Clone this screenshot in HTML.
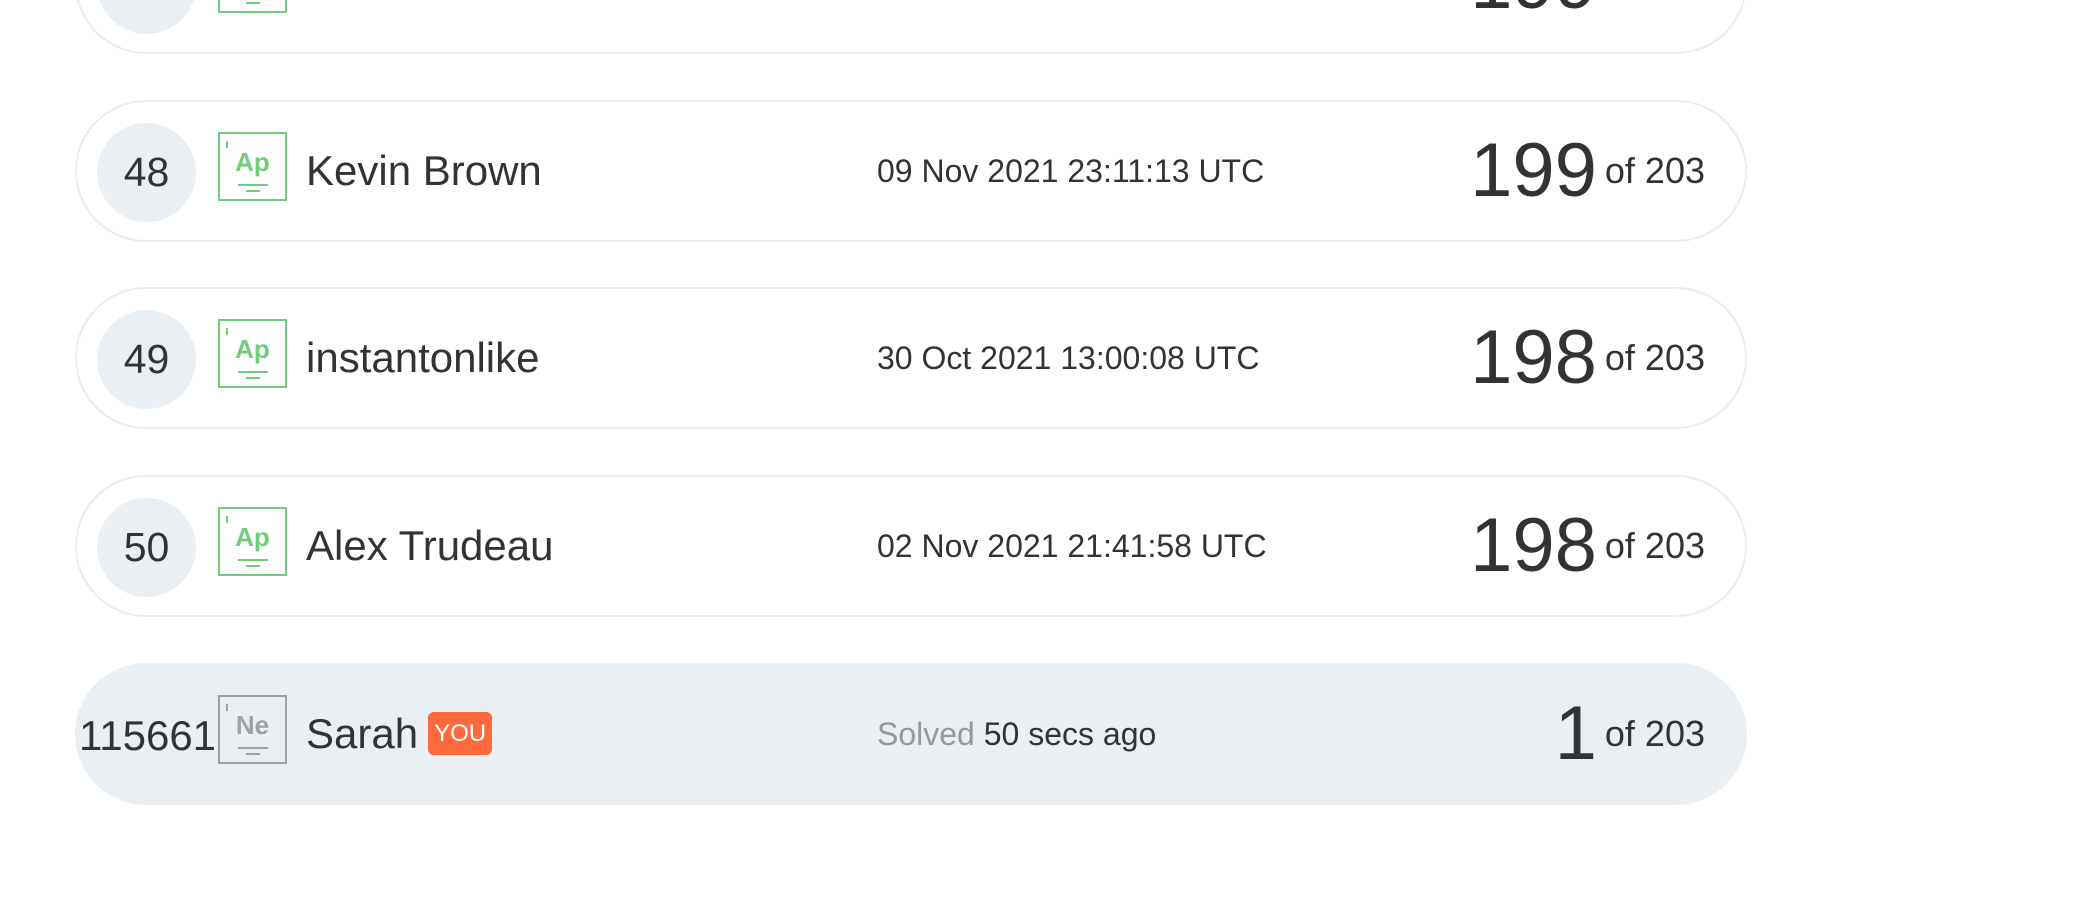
<!DOCTYPE html>
<html><head><meta charset="utf-8"><style>
*{margin:0;padding:0;box-sizing:border-box}
body{width:2096px;height:912px;background:#fff;font-family:"Liberation Sans",Arial,sans-serif;color:#333;position:relative;overflow:hidden}
.row{position:absolute;left:75px;width:1672px;height:142px;border:2px solid #e8edf0;border-radius:71px;background:#fff}
.row.me{background:#e9eff2;border-color:#e9eff2}
.rank{position:absolute;left:20px;top:21px;width:99px;height:99px;border-radius:50%;background:#e9eff2;font-size:41px;line-height:99px;text-align:center}
.me .rank{background:none;left:2px;width:auto;text-align:left;font-size:42px}
.ico{position:absolute;left:141px;top:30px;width:69px;height:69px;border:2px solid #72cc7c;color:#72cc7c}
.ico .t{position:absolute;left:6px;top:7px;width:2px;height:7px;background:currentColor}
.ico .s{position:absolute;left:0;right:0;top:14px;text-align:center;font-weight:bold;font-size:26px;line-height:28px}
.ico .l1{position:absolute;left:18px;width:30px;top:50px;height:2px;background:currentColor}
.ico .l2{position:absolute;left:26px;width:14px;top:56px;height:2px;background:currentColor}
.me .ico{border-color:#a2a2a2;color:#a2a2a2}
.name{position:absolute;left:229px;top:0;line-height:138px;font-size:42px}
.date{position:absolute;left:800px;top:0;line-height:138px;font-size:32px}
.score{position:absolute;right:40px;top:0;line-height:138px;white-space:nowrap}
.score b{font-weight:normal;font-size:76px;vertical-align:middle}
.score span{font-size:36px;vertical-align:middle;margin-left:8px}
.you{display:inline-block;background:#fd6a3e;color:#fff;font-size:24px;line-height:43px;height:43px;padding:0 6px;border-radius:6px;vertical-align:middle;margin-left:10px;position:relative;top:-3px}
</style></head><body>
<div class="row" style="top:-88px"><div class="rank">47</div><div class="ico"><div class="t"></div><div class="s">Ap</div><div class="l1"></div><div class="l2"></div></div><div class="name">Name</div><div class="score"><b>199</b><span>of 203</span></div></div>
<div class="row" style="top:100px"><div class="rank">48</div><div class="ico"><div class="t"></div><div class="s">Ap</div><div class="l1"></div><div class="l2"></div></div><div class="name">Kevin Brown</div><div class="date">09 Nov 2021 23:11:13 UTC</div><div class="score"><b>199</b><span>of 203</span></div></div>
<div class="row" style="top:287px"><div class="rank">49</div><div class="ico"><div class="t"></div><div class="s">Ap</div><div class="l1"></div><div class="l2"></div></div><div class="name">instantonlike</div><div class="date">30 Oct 2021 13:00:08 UTC</div><div class="score"><b>198</b><span>of 203</span></div></div>
<div class="row" style="top:475px"><div class="rank">50</div><div class="ico"><div class="t"></div><div class="s">Ap</div><div class="l1"></div><div class="l2"></div></div><div class="name">Alex Trudeau</div><div class="date">02 Nov 2021 21:41:58 UTC</div><div class="score"><b>198</b><span>of 203</span></div></div>
<div class="row me" style="top:663px"><div class="rank">115661</div><div class="ico"><div class="t"></div><div class="s">Ne</div><div class="l1"></div><div class="l2"></div></div><div class="name">Sarah<span class="you">YOU</span></div><div class="date"><span style="color:#999">Solved</span> 50 secs ago</div><div class="score"><b>1</b><span>of 203</span></div></div>
</body></html>
